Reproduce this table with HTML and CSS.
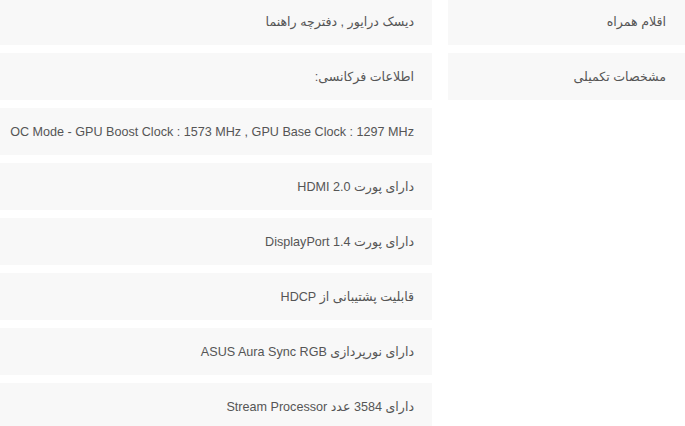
FILE: index.html
```html
<!DOCTYPE html>
<html lang="fa" dir="rtl">
<head>
<meta charset="utf-8">
<link rel="stylesheet" href="styles.css">
</head>
<body>
<div class="specs">
  <div class="spec-row">
    <div class="spec-label">اقلام همراه</div>
    <div class="spec-values">
      <div class="spec-value">دیسک درایور , دفترچه راهنما</div>
    </div>
  </div>
  <div class="spec-row">
    <div class="spec-label">مشخصات تکمیلی</div>
    <div class="spec-values">
      <div class="spec-value">اطلاعات فرکانسی:</div>
      <div class="spec-value">OC Mode - GPU Boost Clock : 1573 MHz , GPU Base Clock : 1297 MHz</div>
      <div class="spec-value">دارای پورت HDMI 2.0</div>
      <div class="spec-value">دارای پورت DisplayPort 1.4</div>
      <div class="spec-value">قابلیت پشتیبانی از HDCP</div>
      <div class="spec-value">دارای نورپردازی ASUS Aura Sync RGB</div>
      <div class="spec-value">دارای 3584 عدد Stream Processor</div>
    </div>
  </div>
</div>
</body>
</html>
```
FILE: styles.css
```css
html, body {
  margin: 0;
  padding: 0;
  background: #ffffff;
}
body {
  font-family: "Liberation Sans", "DejaVu Sans", sans-serif;
  font-size: 12.6px;
  color: #555555;
  overflow: hidden;
}
.specs {
  display: flex;
  flex-direction: column;
  gap: 8px;
  margin-top: -2px;
}
.spec-row {
  display: flex;
  align-items: flex-start;
  gap: 16px;
}
.spec-label {
  flex: 0 0 237px;
  box-sizing: border-box;
  height: 47px;
  display: flex;
  align-items: center;
  padding-right: 19px;
  background: #f8f8f8;
}
.spec-values {
  flex: 0 0 432px;
  display: flex;
  flex-direction: column;
  gap: 8px;
}
.spec-value {
  box-sizing: border-box;
  height: 47px;
  display: flex;
  align-items: center;
  padding-right: 18px;
  background: #f8f8f8;
  white-space: nowrap;
}
```
